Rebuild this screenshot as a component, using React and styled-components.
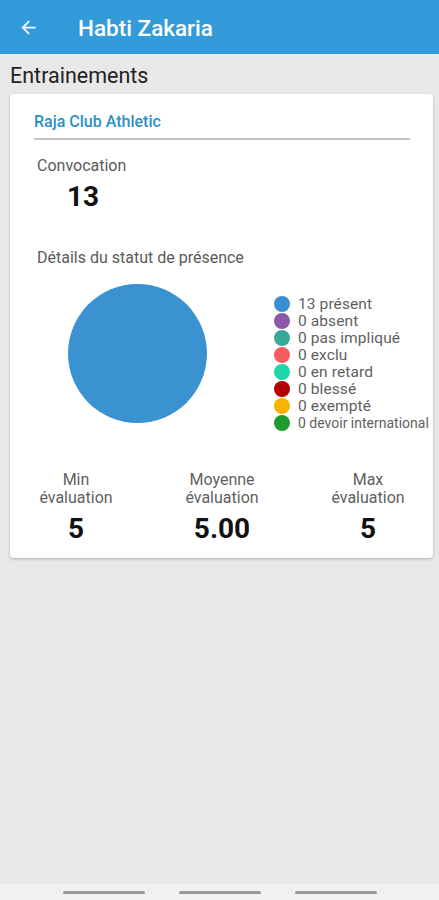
import React from "react";
import styled, { createGlobalStyle } from "styled-components";

const Global = createGlobalStyle`
  html, body { margin: 0; padding: 0; }
  body { font-family: Roboto, "Noto Sans", sans-serif; background: #e8e8e8; }
`;

const legend = [
  { n: 13, label: "présent", color: "#3b8fd0" },
  { n: 0, label: "absent", color: "#8b5aa6" },
  { n: 0, label: "pas impliqué", color: "#3aa897" },
  { n: 0, label: "exclu", color: "#f45b5e" },
  { n: 0, label: "en retard", color: "#1fd6a8" },
  { n: 0, label: "blessé", color: "#b40000" },
  { n: 0, label: "exempté", color: "#f6b400" },
  { n: 0, label: "devoir international", color: "#1e9a2e", small: true },
];

const stats = [
  { top: "Min", value: "5" },
  { top: "Moyenne", value: "5.00" },
  { top: "Max", value: "5" },
];

export default function App() {
  return (
    <>
      <Global />
      <Page>
        <Header>
          <svg width="21" height="21" viewBox="0 0 24 24">
            <path d="M20 11H7.83l5.59-5.59L12 4l-8 8 8 8 1.41-1.41L7.83 13H20v-2z" fill="#fff" />
          </svg>
          <Title>Habti Zakaria</Title>
        </Header>
        <Main>
          <Section>Entrainements</Section>
          <Card>
            <Club>Raja Club Athletic</Club>
            <Label>Convocation</Label>
            <Big>13</Big>
            <Label $top={35}>Détails du statut de présence</Label>
            <ChartRow>
              <Pie />
              <Legend>
                {legend.map((l) => (
                  <LegendItem key={l.label} $small={l.small}>
                    <Dot $color={l.color} />
                    {l.n} {l.label}
                  </LegendItem>
                ))}
              </Legend>
            </ChartRow>
            <Stats>
              {stats.map((s) => (
                <Stat key={s.top}>
                  <StatLabel>
                    {s.top}
                    <br />
                    évaluation
                  </StatLabel>
                  <StatValue>{s.value}</StatValue>
                </Stat>
              ))}
            </Stats>
          </Card>
        </Main>
        <NavBar>
          <NavLine />
          <NavLine />
          <NavLine />
        </NavBar>
      </Page>
    </>
  );
}

const Page = styled.div`
  display: flex;
  flex-direction: column;
  height: 900px;
  background: #e8e8e8;`;
const Header = styled.div`
  height: 54px;
  background: #349bda;
  display: flex;
  align-items: center;
  padding-left: 18px;
  flex-shrink: 0;`;
const Title = styled.div`
  color: #fff;
  font-size: 22.5px;
  font-weight: 500;
  margin-left: 39px;
  margin-top: 1px;`;
const Main = styled.div`
  flex: 1;
  padding: 10px 6px 0 10px;`;
const Section = styled.div`
  font-size: 21.5px;
  color: #222;
  line-height: 24px;
  margin-bottom: 6px;`;
const Card = styled.div`
  background: #fff;
  border-radius: 4px;
  box-shadow: 0 1px 3px rgba(0, 0, 0, 0.25);
  padding: 18px 23px 16px 24px;
  height: 464px;
  box-sizing: border-box;`;
const Club = styled.div`
  color: #2c8fca;
  font-size: 16px;
  font-weight: 500;
  padding-bottom: 7px;
  border-bottom: 2px solid #c4c4c4;
  margin-bottom: 16px;`;
const Label = styled.div`
  font-size: 16px;
  color: #5a5a5a;
  margin-left: 3px;
  margin-top: ${(p) => p.$top || 0}px;`;
const Big = styled.div`
  font-size: 28px;
  font-weight: 700;
  color: #111;
  margin-left: 33px;
  margin-top: 5px;`;
const ChartRow = styled.div`
  display: flex;
  align-items: center;
  margin-top: 8px;`;
const Pie = styled.div`
  width: 139px;
  height: 139px;
  border-radius: 50%;
  background: #3a93d0;
  margin-left: 34px;
  flex-shrink: 0;`;
const Legend = styled.div`
  margin-left: 67px;
  display: flex;
  flex-direction: column;
  margin-top: 20px;`;
const LegendItem = styled.div`
  display: flex;
  align-items: center;
  height: 17px;
  font-size: ${(p) => (p.$small ? 14 : 15.5)}px;
  letter-spacing: ${(p) => (p.$small ? 0 : 0.1)}px;
  color: #5f5f5f;
  white-space: nowrap;`;
const Dot = styled.span`
  width: 16px;
  height: 16px;
  border-radius: 50%;
  background: ${(p) => p.$color};
  margin-right: 8px;
  flex-shrink: 0;`;
const Stats = styled.div`
  display: grid;
  grid-template-columns: 1fr 1fr 1fr;
  margin: 40px -31px 0 -31px;`;
const Stat = styled.div`
  text-align: center;`;
const StatLabel = styled.div`
  font-size: 16px;
  color: #5f5f5f;
  line-height: 18px;`;
const StatValue = styled.div`
  font-size: 28px;
  font-weight: 700;
  color: #111;
  margin-top: 5px;`;
const NavBar = styled.div`
  height: 16px;
  background: #f1f1f1;
  display: flex;
  justify-content: center;
  align-items: center;
  gap: 34px;
  flex-shrink: 0;`;
const NavLine = styled.div`
  width: 82px;
  height: 3px;
  border-radius: 2px;
  background: #9a9a9a;`;
